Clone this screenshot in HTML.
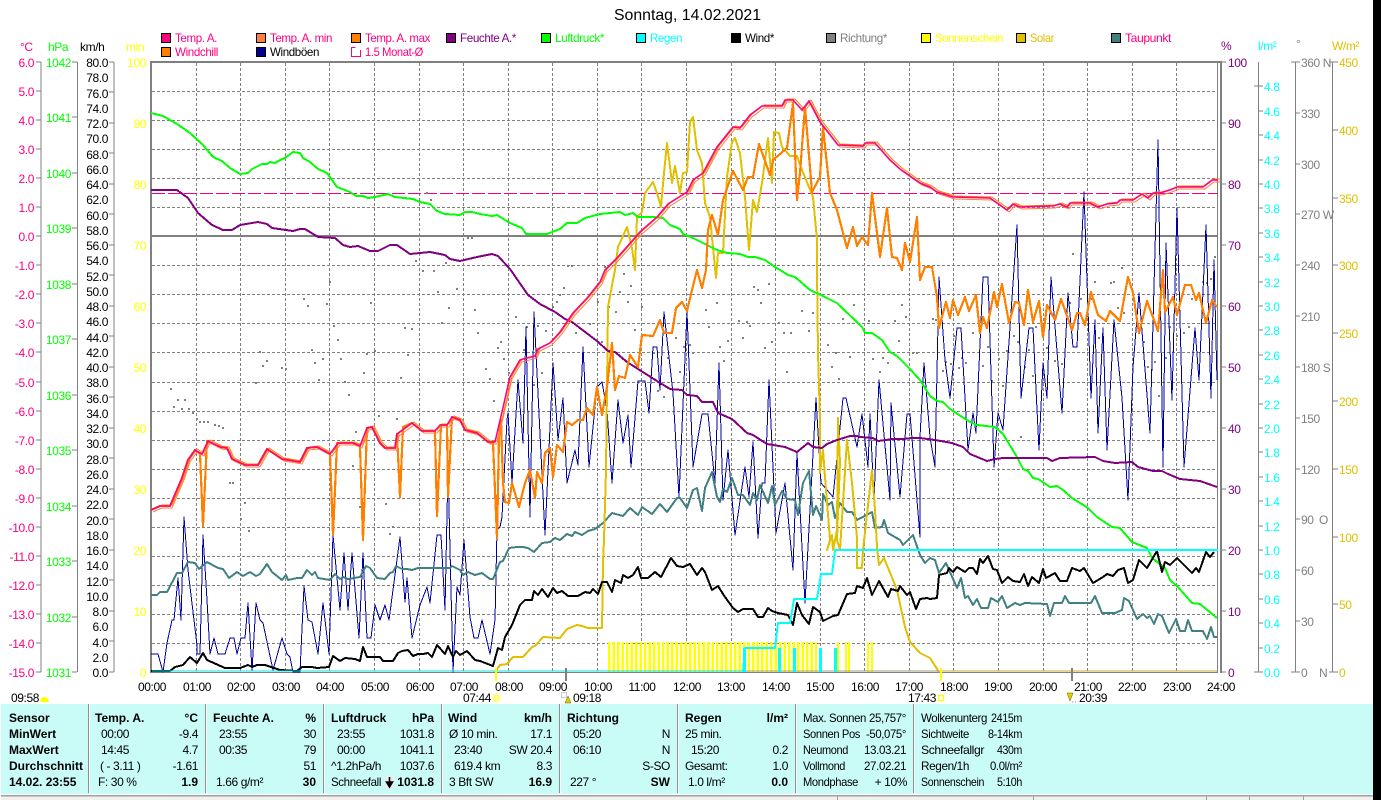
<!DOCTYPE html>
<html lang="de">
<head>
<meta charset="utf-8">
<title>Sonntag, 14.02.2021</title>
<style>
html,body{margin:0;padding:0;background:#fff}
svg{display:block;position:absolute;left:0;top:0}
text{font-family:"Liberation Sans",sans-serif;font-size:12px;letter-spacing:-.4px;white-space:pre}
.r{text-anchor:end}
.m{text-anchor:middle}
.b{font-weight:bold;letter-spacing:0}
.nl{letter-spacing:0}
.t{fill:#ff0080}.h{fill:#00ff00}.k{fill:#000}.y{fill:#ffff00}.p{fill:#800080}.c{fill:#00ffff}.g{fill:#808080}.s{fill:#e0c000}
.l{fill:none;stroke-linejoin:round;shape-rendering:crispEdges}
.cr{shape-rendering:crispEdges}
</style>
</head>
<body>
<svg width="1381" height="800" viewBox="0 0 1381 800" xmlns="http://www.w3.org/2000/svg">
<defs>
<polyline id="tmp" fill="none" points="151,510 160,506 170,506 182,478 188,460 195,450 202,454 208,441 220,447 227,448 232,459 245,465 258,465 267,449 282,459 300,462 307,448 317,447 330,454 338,443 353,443 360,446 367,428 372,427 380,443 385,448 395,448 397,434 412,423 422,431 435,431 440,425 447,425 452,417 460,420 465,430 477,433 488,442 495,442 502,412 510,377 520,360 535,356 538,349 550,343 560,332 573,313 588,297 600,282 605,270 617,258 640,232 657,217 668,204 687,192 693,180 703,173 717,147 733,127 740,128 750,115 762,106 782,106 785,100 793,100 802,110 809,101 820,122 838,145 863,146 865,143 875,143 890,160 900,169 920,183 930,187 937,192 953,197 990,198 1007,210 1013,204 1020,207 1053,206 1060,204 1067,207 1070,203 1090,203 1098,207 1107,204 1117,203 1120,200 1133,200 1142,194 1148,198 1153,193 1160,193 1170,190 1177,187 1203,187 1212,180 1218,180"/>
</defs>

<!-- black strip -->
<rect x="1373" y="0" width="8" height="800" fill="#000"/>

<!-- title -->
<text x="614" y="20" style="font-size:16px;letter-spacing:0" textLength="147" lengthAdjust="spacingAndGlyphs">Sonntag, 14.02.2021</text>

<!-- legend -->
<g stroke="#000" stroke-width="1.2" class="cr">
<rect x="161.5" y="33.5" width="9" height="9" fill="#ff0080"/>
<rect x="256.5" y="33.5" width="9" height="9" fill="#ff8040"/>
<rect x="351.5" y="33.5" width="9" height="9" fill="#ff8000"/>
<rect x="446.5" y="33.5" width="9" height="9" fill="#800080"/>
<rect x="541.5" y="33.5" width="9" height="9" fill="#00ff00"/>
<rect x="636.5" y="33.5" width="9" height="9" fill="#00ffff"/>
<rect x="731.5" y="33.5" width="9" height="9" fill="#000"/>
<rect x="826.5" y="33.5" width="9" height="9" fill="#808080"/>
<rect x="921.5" y="33.5" width="9" height="9" fill="#ffff00"/>
<rect x="1016.5" y="33.5" width="9" height="9" fill="#e0c000"/>
<rect x="1111.5" y="33.5" width="9" height="9" fill="#408080"/>
<rect x="161.5" y="47.5" width="9" height="9" fill="#ff8000"/>
<rect x="256.5" y="47.5" width="9" height="9" fill="#000090"/>
</g>
<path d="M355.5 47.5H351.5V56.5H360.5V50" fill="none" stroke="#ff0080" stroke-width="1.2" class="cr"/>
<g>
<text class="t" x="175" y="42" textLength="42" lengthAdjust="spacingAndGlyphs">Temp. A.</text>
<text class="t" x="270" y="42" textLength="62" lengthAdjust="spacingAndGlyphs">Temp. A. min</text>
<text class="t" x="365" y="42" textLength="65" lengthAdjust="spacingAndGlyphs">Temp. A. max</text>
<text class="p" x="460" y="42" textLength="56" lengthAdjust="spacingAndGlyphs">Feuchte A.*</text>
<text class="h" x="555" y="42" textLength="49" lengthAdjust="spacingAndGlyphs">Luftdruck*</text>
<text class="c" x="650" y="42" textLength="32" lengthAdjust="spacingAndGlyphs">Regen</text>
<text class="k" x="745" y="42" textLength="29" lengthAdjust="spacingAndGlyphs">Wind*</text>
<text class="g" x="840" y="42" textLength="47" lengthAdjust="spacingAndGlyphs">Richtung*</text>
<text class="y" x="935" y="42" textLength="68" lengthAdjust="spacingAndGlyphs">Sonnenschein</text>
<text class="s" x="1030" y="42" textLength="24" lengthAdjust="spacingAndGlyphs">Solar</text>
<text class="t" x="1125" y="42" textLength="46" lengthAdjust="spacingAndGlyphs">Taupunkt</text>
<text class="t" x="175" y="56" textLength="43" lengthAdjust="spacingAndGlyphs">Windchill</text>
<text class="k" x="270" y="56" textLength="49" lengthAdjust="spacingAndGlyphs">Windböen</text>
<text class="t" x="365" y="56" textLength="58" lengthAdjust="spacingAndGlyphs">1.5 Monat-Ø</text>
</g>

<!-- axis titles -->
<text class="t" x="20" y="51">°C</text>
<text class="h" x="48" y="51">hPa</text>
<text class="k" x="80" y="51">km/h</text>
<text class="y" x="126" y="51">min</text>
<text class="p" x="1221" y="50">%</text>
<text class="c" x="1258" y="50">l/m²</text>
<text class="g" x="1296" y="48">°</text>
<text class="s" x="1332" y="50">W/m²</text>

<!-- left axes lines + ticks -->
<path class="cr" fill="none" stroke="#808080" stroke-width="1" d="M41 62V672M77.500 62V672M114 62V672
M36 62H41M36 91H41M36 120H41M36 149H41M36 178H41M36 207H41M36 236H41M36 265H41M36 294H41M36 323H41M36 352H41M36 382H41M36 411H41M36 440H41M36 469H41M36 498H41M36 527H41M36 556H41M36 585H41M36 614H41M36 643H41M36 672H41
M72 62H77M72 117H77M72 173H77M72 228H77M72 284H77M72 339H77M72 395H77M72 450H77M72 506H77M72 561H77M72 617H77M72 672H77
M109 62H114M109 92H114M109 123H114M109 153H114M109 184H114M109 214H114M109 245H114M109 275H114M109 306H114M109 336H114M109 367H114M109 397H114M109 428H114M109 458H114M109 489H114M109 519H114M109 550H114M109 580H114M109 611H114M109 641H114M109 672H114"/>

<!-- right axes lines + ticks -->
<path class="cr" fill="none" stroke="#808080" stroke-width="1" d="M1258.500 62V672M1295.500 62V672M1332.500 62V672
M1222 62H1226M1222 123H1226M1222 184H1226M1222 245H1226M1222 306H1226M1222 367H1226M1222 428H1226M1222 489H1226M1222 550H1226M1222 611H1226M1222 672H1226
M1254 86H1263M1259 111H1263M1259 135H1263M1259 160H1263M1259 184H1263M1259 208H1263M1259 233H1263M1259 257H1263M1259 282H1263M1259 306H1263M1259 330H1263M1259 355H1263M1259 379H1263M1259 404H1263M1259 428H1263M1259 452H1263M1259 477H1263M1259 501H1263M1259 526H1263M1259 550H1263M1259 574H1263M1259 599H1263M1259 623H1263M1259 648H1263M1254 672H1263
M1291 62H1300M1296 113H1300M1296 164H1300M1296 214H1300M1296 265H1300M1296 316H1300M1296 367H1300M1296 418H1300M1296 469H1300M1296 519H1300M1296 570H1300M1296 621H1300M1291 672H1300
M1329 62H1338M1333 130H1338M1333 198H1338M1333 265H1338M1333 333H1338M1333 401H1338M1333 469H1338M1333 537H1338M1333 604H1338M1329 672H1338"/>

<!-- temp labels -->
<g class="t">
<text class="r" x="34" y="67">6.0</text><text class="r" x="34" y="96">5.0</text><text class="r" x="34" y="125">4.0</text><text class="r" x="34" y="154">3.0</text><text class="r" x="34" y="183">2.0</text><text class="r" x="34" y="212">1.0</text><text class="r" x="34" y="241">0.0</text><text class="r" x="34" y="270">-1.0</text><text class="r" x="34" y="299">-2.0</text><text class="r" x="34" y="328">-3.0</text><text class="r" x="34" y="357">-4.0</text><text class="r" x="34" y="387">-5.0</text><text class="r" x="34" y="416">-6.0</text><text class="r" x="34" y="445">-7.0</text><text class="r" x="34" y="474">-8.0</text><text class="r" x="34" y="503">-9.0</text><text class="r" x="34" y="532">-10.0</text><text class="r" x="34" y="561">-11.0</text><text class="r" x="34" y="590">-12.0</text><text class="r" x="34" y="619">-13.0</text><text class="r" x="34" y="648">-14.0</text><text class="r" x="34" y="677">-15.0</text>
</g>
<!-- hPa labels -->
<g class="h">
<text class="r" x="71" y="67">1042</text><text class="r" x="71" y="122">1041</text><text class="r" x="71" y="178">1040</text><text class="r" x="71" y="233">1039</text><text class="r" x="71" y="289">1038</text><text class="r" x="71" y="344">1037</text><text class="r" x="71" y="400">1036</text><text class="r" x="71" y="455">1035</text><text class="r" x="71" y="511">1034</text><text class="r" x="71" y="566">1033</text><text class="r" x="71" y="622">1032</text><text class="r" x="71" y="677">1031</text>
</g>
<!-- km/h labels -->
<g class="k">
<text class="r" x="108" y="67">80.0</text><text class="r" x="108" y="82">78.0</text><text class="r" x="108" y="98">76.0</text><text class="r" x="108" y="113">74.0</text><text class="r" x="108" y="128">72.0</text><text class="r" x="108" y="143">70.0</text><text class="r" x="108" y="159">68.0</text><text class="r" x="108" y="174">66.0</text><text class="r" x="108" y="189">64.0</text><text class="r" x="108" y="204">62.0</text><text class="r" x="108" y="220">60.0</text><text class="r" x="108" y="235">58.0</text><text class="r" x="108" y="250">56.0</text><text class="r" x="108" y="265">54.0</text><text class="r" x="108" y="281">52.0</text><text class="r" x="108" y="296">50.0</text><text class="r" x="108" y="311">48.0</text><text class="r" x="108" y="326">46.0</text><text class="r" x="108" y="342">44.0</text><text class="r" x="108" y="357">42.0</text><text class="r" x="108" y="372">40.0</text><text class="r" x="108" y="387">38.0</text><text class="r" x="108" y="403">36.0</text><text class="r" x="108" y="418">34.0</text><text class="r" x="108" y="433">32.0</text><text class="r" x="108" y="448">30.0</text><text class="r" x="108" y="464">28.0</text><text class="r" x="108" y="479">26.0</text><text class="r" x="108" y="494">24.0</text><text class="r" x="108" y="509">22.0</text><text class="r" x="108" y="525">20.0</text><text class="r" x="108" y="540">18.0</text><text class="r" x="108" y="555">16.0</text><text class="r" x="108" y="570">14.0</text><text class="r" x="108" y="586">12.0</text><text class="r" x="108" y="601">10.0</text><text class="r" x="108" y="616">8.0</text><text class="r" x="108" y="631">6.0</text><text class="r" x="108" y="647">4.0</text><text class="r" x="108" y="662">2.0</text><text class="r" x="108" y="677">0.0</text>
</g>
<!-- min labels -->
<g class="y">
<text class="r" x="146" y="67">100</text><text class="r" x="146" y="128">90</text><text class="r" x="146" y="189">80</text><text class="r" x="146" y="250">70</text><text class="r" x="146" y="311">60</text><text class="r" x="146" y="372">50</text><text class="r" x="146" y="433">40</text><text class="r" x="146" y="494">30</text><text class="r" x="146" y="555">20</text><text class="r" x="146" y="616">10</text><text class="r" x="146" y="677">0</text>
</g>
<!-- % labels -->
<g class="p">
<text x="1228" y="67">100</text><text x="1228" y="128">90</text><text x="1228" y="189">80</text><text x="1228" y="250">70</text><text x="1228" y="311">60</text><text x="1228" y="372">50</text><text x="1228" y="433">40</text><text x="1228" y="494">30</text><text x="1228" y="555">20</text><text x="1228" y="616">10</text><text x="1228" y="677">0</text>
</g>
<!-- l/m2 labels -->
<g class="c">
<text x="1264" y="91">4.8</text><text x="1264" y="116">4.6</text><text x="1264" y="140">4.4</text><text x="1264" y="165">4.2</text><text x="1264" y="189">4.0</text><text x="1264" y="213">3.8</text><text x="1264" y="238">3.6</text><text x="1264" y="262">3.4</text><text x="1264" y="287">3.2</text><text x="1264" y="311">3.0</text><text x="1264" y="335">2.8</text><text x="1264" y="360">2.6</text><text x="1264" y="384">2.4</text><text x="1264" y="409">2.2</text><text x="1264" y="433">2.0</text><text x="1264" y="457">1.8</text><text x="1264" y="482">1.6</text><text x="1264" y="506">1.4</text><text x="1264" y="531">1.2</text><text x="1264" y="555">1.0</text><text x="1264" y="579">0.8</text><text x="1264" y="604">0.6</text><text x="1264" y="628">0.4</text><text x="1264" y="653">0.2</text><text x="1264" y="677">0.0</text>
</g>
<!-- degree labels -->
<g class="g">
<text x="1301" y="67">360 N</text><text x="1301" y="118">330</text><text x="1301" y="169">300</text><text x="1301" y="219">270 W</text><text x="1301" y="270">240</text><text x="1301" y="321">210</text><text x="1301" y="372">180 S</text><text x="1301" y="423">150</text><text x="1301" y="474">120</text><text x="1301" y="524">90</text><text x="1319" y="524">O</text><text x="1301" y="575">60</text><text x="1301" y="626">30</text><text x="1301" y="677">0</text><text x="1319" y="677">N</text>
</g>
<!-- solar labels -->
<g class="s">
<text x="1339" y="67">450</text><text x="1339" y="135">400</text><text x="1339" y="203">350</text><text x="1339" y="270">300</text><text x="1339" y="338">250</text><text x="1339" y="406">200</text><text x="1339" y="474">150</text><text x="1339" y="542">100</text><text x="1339" y="609">50</text><text x="1339" y="677">0</text>
</g>

<!-- grid -->
<path class="cr" fill="none" stroke="#808080" stroke-width="1" stroke-dasharray="3 2" d="M152 91.500H1218M152 120.500H1218M152 149.500H1218M152 178.500H1218M152 207.500H1218M152 265.500H1218M152 294.500H1218M152 323.500H1218M152 352.500H1218M152 382.500H1218M152 411.500H1218M152 440.500H1218M152 469.500H1218M152 498.500H1218M152 527.500H1218M152 556.500H1218M152 585.500H1218M152 614.500H1218M152 643.500H1218
M196.500 63V672M240.500 63V672M285.500 63V672M329.500 63V672M374.500 63V672M419.500 63V672M463.500 63V672M508.500 63V672M552.500 63V672M597.500 63V672M641.500 63V672M686.500 63V672M731.500 63V672M775.500 63V672M820.500 63V672M864.500 63V672M909.500 63V672M953.500 63V672M998.500 63V672M1043.500 63V672M1087.500 63V672M1132.500 63V672M1176.500 63V672"/>
<!-- frame + zero + average -->
<g class="cr" fill="#808080">
<rect x="150" y="61" width="1072" height="2"/>
<rect x="150" y="61" width="2" height="612"/>
<rect x="1220" y="61" width="2" height="612"/>
<rect x="1217" y="63" width="1" height="609"/>
<rect x="152" y="235" width="1066" height="2"/>
<rect x="152" y="672" width="1066" height="1"/>
</g>
<path class="cr" d="M152 193.500H1218" stroke="#f0007f" stroke-width="1" stroke-dasharray="13 3" fill="none"/>

<!-- direction dots -->
<path class="cr" fill="none" stroke="#808080" stroke-width="2" d="M170 389h2M177 400h2M184 400h2M173 407h2M181 409h2M188 409h2M192 413h2M196 419h2M199 422h2M203 422h2M207 422h2M214 425h2M218 426h2M222 428h2M229 483h2M232 483h2M244 503h2M240 519h2M248 531h2M259 352h2M266 361h2M262 366h2M255 383h2M281 368h2M285 369h2M303 299h2M307 306h2M326 304h2M329 282h2M311 350h2M322 359h2M314 363h2M318 380h2M333 326h2M337 340h2M340 359h2M344 382h2M348 395h2M355 432h2M352 466h2M359 507h2M370 303h2M366 354h2M374 351h2M363 373h2M378 416h2M385 504h2M389 534h2M392 527h2M396 419h2M400 378h2M407 355h2M404 328h2M411 329h2M422 271h2M433 271h2M437 292h2M456 289h2M448 308h2M441 323h2M426 193h2M430 200h2M415 261h2M445 263h2M467 238h2M471 238h2M567 266h2M571 266h2M604 267h2M474 310h2M477 333h2M500 342h2M497 348h2M503 359h2M485 369h2M489 379h2M493 401h2M515 317h2M508 373h2M523 350h2M526 327h2M537 326h2M545 331h2M541 373h2M533 385h2M552 307h2M556 302h2M559 295h2M563 288h2M582 362h2M575 333h2M589 324h2M597 302h2M601 342h2M608 307h2M615 312h2M619 292h2M627 302h2M630 286h2M623 274h2M634 330h2M641 307h2M653 353h2M657 391h2M663 397h2M667 358h2M675 338h2M679 372h2M683 347h2M689 345h2M692 353h2M705 310h2M708 327h2M716 303h2M719 347h2M723 361h2M727 341h2M738 321h2M746 322h2M749 326h2M742 338h2M753 287h2M757 290h2M760 303h2M764 348h2M768 284h2M771 342h2M778 323h2M783 333h2M786 372h2M790 333h2M801 311h2M808 331h2M812 313h2M827 345h2M831 367h2M835 353h2M838 379h2M842 319h2M849 357h2M853 305h2M868 321h2M872 359h2M879 372h2M882 358h2M887 363h2M894 321h2M901 305h2M898 341h2M905 317h2M912 353h2M916 353h2M1072 254h2M1121 268h2M1214 257h2M932 319h2M935 320h2M972 333h2M953 336h2M945 362h2M950 364h2M942 371h2M958 368h2M961 358h2M965 363h2M982 366h2M987 347h2M998 359h2M991 381h2M1002 386h2M1006 351h2M1013 336h2M1017 342h2M1020 437h2M1024 367h2M1028 350h2M1032 376h2M1035 327h2M1046 348h2M1054 361h2M1061 364h2M1069 303h2M1077 313h2M1080 299h2M1091 299h2M1094 282h2M1098 338h2M1110 283h2M1113 282h2M1117 308h2M1123 313h2M1143 342h2M1147 367h2M1151 370h2M1154 362h2M1158 396h2M1165 358h2M1169 327h2M1176 336h2M1183 333h2M1188 327h2M1191 299h2M1195 299h2M1202 282h2M1206 283h2M1210 279h2M1217 275h1"/>

<!-- sunshine bars -->
<path class="cr" d="M608 657H817" fill="none" stroke="#ffff00" stroke-width="30" stroke-dasharray="2.500 2"/>
<g class="cr" fill="#ffff00">
<rect x="837" y="642" width="2" height="30"/>
<rect x="845" y="642" width="2" height="30"/><rect x="848" y="642" width="2" height="30"/>
<rect x="867" y="642" width="2" height="30"/><rect x="871" y="642" width="2" height="30"/>
</g>

<!-- gusts -->
<polyline class="l" stroke="#0000a0" stroke-width="1" points="151,654 158,654 163,672 167,643 172,620 174,620 178,578 181,620 184,517 188,570 197,645 197,654 200,654 203,535 207,600 210,654 214,638 218,654 225,654 230,638 234,638 237,654 241,638 245,638 248,603 252,670 256,603 260,620 263,623 273,670 282,638 287,654 290,657 293,672 300,672 304,586 308,620 312,622 318,654 323,603 329,654 333,535 340,610 344,553 348,610 352,553 359,638 363,553 367,638 371,638 375,605 380,620 385,605 389,620 400,537 405,602 407,578 412,638 420,605 427,587 430,603 437,535 441,535 445,610 448,467 453,672 457,587 460,595 464,540 470,617 474,638 478,638 482,620 490,654 495,620 497,530 500,527 502,517 507,420 508,413 512,483 518,380 523,443 526,327 530,517 534,312 545,535 553,363 558,440 563,398 567,483 575,450 578,465 583,347 589,467 597,387 602,382 607,410 612,483 618,400 623,443 628,415 631,467 638,381 645,381 649,413 653,347 657,347 660,390 664,312 673,393 679,497 687,312 693,467 702,414 708,414 715,483 719,363 723,500 728,450 735,535 745,467 749,497 753,442 758,538 762,483 765,483 769,380 776,533 785,483 793,570 797,453 805,603 816,398 821,483 833,497 843,398 846,398 857,447 862,414 868,467 870,414 874,500 879,380 890,500 891,403 900,497 907,414 910,414 920,537 920,437 924,363 930,437 935,467 939,277 945,360 950,398 957,328 961,328 968,450 973,413 976,433 983,277 988,277 994,467 998,413 1003,430 1017,225 1021,398 1029,328 1033,328 1039,450 1043,363 1047,398 1051,277 1062,413 1068,293 1073,347 1077,347 1084,192 1091,398 1095,320 1098,433 1103,328 1107,450 1114,320 1122,398 1128,500 1133,367 1139,293 1150,433 1158,140 1163,467 1166,243 1172,400 1177,208 1184,467 1195,328 1199,380 1206,225 1211,398 1214,260 1217,380"/>

<!-- dew point -->
<polyline class="l" stroke="#408080" stroke-width="2" points="151,595 157,595 160,592 167,592 177,573 182,573 188,562 195,563 199,569 207,562 218,568 223,569 229,578 237,572 243,576 250,572 256,576 260,574 267,564 272,572 282,580 286,575 288,580 297,578 302,578 307,570 312,575 315,572 318,578 330,580 335,574 340,579 343,577 348,579 360,577 366,566 370,568 377,578 385,579 390,573 393,572 396,566 402,569 407,569 412,570 418,568 443,568 450,568 452,566 460,570 463,575 468,572 475,575 482,573 490,579 493,579 500,562 503,561 509,548 517,547 523,547 528,548 534,552 542,543 550,542 555,538 560,540 567,534 572,536 575,532 582,535 588,531 595,529 603,523 612,513 623,516 630,508 638,515 642,507 652,514 660,504 667,512 677,498 680,498 687,508 693,490 697,488 702,511 705,488 712,472 717,497 720,502 723,489 727,492 732,478 738,495 743,495 750,505 753,493 757,500 760,485 768,503 772,486 775,505 782,491 787,499 795,500 798,515 803,483 809,471 813,515 816,506 822,520 823,494 828,505 832,502 835,518 840,503 847,512 852,512 857,520 872,512 875,528 882,527 884,520 888,533 900,540 903,545 913,535 920,555 925,563 930,558 935,560 939,573 946,563 950,572 957,588 961,578 965,598 968,596 973,605 977,599 981,608 988,608 991,598 998,602 1002,596 1007,608 1015,603 1020,605 1025,603 1047,604 1050,616 1054,603 1062,603 1065,596 1069,603 1091,603 1095,596 1102,613 1115,613 1122,610 1124,598 1129,601 1137,619 1143,614 1147,618 1150,616 1154,624 1158,614 1162,616 1169,633 1176,619 1180,631 1185,631 1188,620 1192,631 1203,631 1207,639 1211,627 1214,637 1217,637"/>

<!-- solar -->
<polyline class="l" stroke="#e0c000" stroke-width="2" points="495,672 500,665 507,664 513,657 523,657 532,647 535,646 543,637 560,638 567,629 577,625 582,626 588,628 602,628 603,563 604,540 606,470 607,387 608,307 613,280 615,270 618,247 627,227 632,248 635,270 637,217 642,212 645,193 653,182 657,193 661,207 664,173 667,143 672,183 675,166 680,193 683,173 687,172 690,122 693,117 697,150 702,163 705,203 710,217 716,278 718,253 723,253 727,177 732,142 735,138 740,153 745,197 749,250 753,200 757,212 762,183 768,138 772,183 774,132 779,133 782,147 790,156 797,156 802,170 813,197 817,240 817,270 818,353 820,420 820,473 823,450 825,477 830,540 827,550 832,535 833,550 837,530 838,418 840,462 837,540 840,550 847,440 852,483 857,538 857,568 862,568 863,550 872,470 875,510 877,547 879,565 884,558 893,580 897,590 905,627 910,642 920,653 930,658 939,672"/>

<!-- pressure -->
<polyline class="l" stroke="#00ff00" stroke-width="2" points="151,113 163,116 177,124 190,133 203,145 213,157 222,161 230,168 240,174 248,173 252,169 262,164 267,164 270,162 275,163 280,160 285,158 293,152 300,153 303,158 310,162 318,169 327,173 337,187 350,192 356,196 363,196 368,198 375,197 388,194 395,197 413,199 420,202 430,204 437,211 445,214 460,215 465,212 472,212 480,214 492,216 497,215 502,218 508,222 522,228 526,234 547,234 560,229 567,223 577,223 585,218 600,214 620,212 625,215 633,213 638,217 653,217 663,218 670,225 680,229 683,234 693,238 717,250 727,253 740,254 748,257 755,257 765,260 775,267 780,270 788,275 795,277 810,290 827,298 837,303 862,327 865,333 872,333 882,340 890,352 897,356 908,367 920,380 930,396 937,401 943,402 950,409 970,422 977,425 995,427 1003,434 1017,457 1023,469 1028,471 1033,478 1038,479 1050,487 1057,486 1063,490 1072,498 1088,508 1097,517 1112,527 1120,528 1132,542 1147,548 1152,558 1165,568 1170,580 1178,587 1192,603 1200,604 1217,618"/>

<!-- humidity -->
<polyline class="l" stroke="#800080" stroke-width="2" points="151,190 177,190 188,198 198,213 212,225 223,230 232,230 240,225 258,222 267,224 272,228 293,231 300,229 305,229 318,237 335,238 343,245 350,247 358,246 370,251 378,251 390,245 397,245 410,254 430,252 445,255 450,259 460,261 477,257 492,254 498,256 510,269 528,295 540,304 555,312 565,319 572,322 597,341 608,351 615,352 627,362 638,369 657,381 670,389 682,390 687,395 697,396 702,402 713,402 718,413 732,419 747,433 753,435 767,444 785,447 797,452 808,443 813,447 822,448 827,444 837,440 850,436 857,436 860,437 873,438 878,441 893,439 902,439 912,438 920,438 935,440 952,443 963,447 970,454 987,461 995,459 1003,458 1047,458 1052,461 1060,458 1095,457 1103,461 1115,463 1132,462 1138,467 1153,471 1162,471 1168,474 1180,479 1200,481 1217,487"/>

<!-- windchill -->
<polyline class="l" stroke="#ff8000" stroke-width="2.200" points="151,510 160,506 170,506 182,478 188,460 195,450 200,454 203,526 207,441 220,447 227,448 232,459 245,465 258,465 267,449 282,459 300,462 307,448 317,447 330,454 333,535 337,443 353,443 360,446 363,540 367,428 372,427 380,443 385,448 395,448 397,434 400,497 403,427 412,423 422,431 435,431 437,516 441,425 447,425 448,497 452,417 460,420 465,430 477,433 488,442 493,443 495,490 497,538 499,437 501,420 503,483 505,502 509,503 512,483 519,507 525,483 530,470 535,498 537,472 542,483 545,453 550,448 553,477 557,445 563,452 567,422 572,425 578,420 583,420 587,408 593,415 597,387 602,415 607,387 612,343 615,390 619,376 625,378 630,355 638,367 642,335 653,336 660,320 664,333 672,333 676,308 682,302 687,311 692,290 697,270 702,288 706,270 708,230 712,215 718,235 723,200 733,171 743,190 748,177 753,177 759,144 770,175 773,160 787,148 793,103 797,200 800,173 805,107 812,192 820,177 823,127 830,193 837,210 847,248 853,227 857,246 862,237 868,245 872,193 880,257 887,208 892,257 897,258 902,270 905,243 910,262 917,217 920,280 925,267 932,267 937,297 939,328 946,302 950,318 953,300 958,315 965,297 969,311 976,295 980,333 983,317 987,328 994,292 997,307 1002,284 1009,323 1015,302 1019,303 1024,325 1028,290 1033,322 1039,301 1043,337 1047,305 1055,320 1061,299 1072,330 1077,313 1080,313 1085,325 1091,292 1098,315 1106,321 1110,311 1120,321 1128,277 1133,293 1139,333 1147,301 1158,331 1163,270 1165,312 1173,297 1177,315 1185,285 1191,285 1196,300 1199,293 1206,323 1212,300 1217,307"/>

<!-- temp max/min/avg -->
<use href="#tmp" transform="translate(2,-1)" stroke="#ff8000" stroke-width="1"/>
<use href="#tmp" transform="translate(2,2)" stroke="#ff8040" stroke-width="1"/>
<use href="#tmp" stroke="#ff0080" stroke-width="1.600"/>

<!-- wind -->
<polyline class="l" stroke="#000" stroke-width="2" points="151,671 170,671 175,667 183,665 190,657 197,663 203,653 207,660 225,668 240,668 248,665 252,667 257,665 265,665 280,670 297,671 302,667 312,667 317,668 329,667 333,656 340,661 345,658 355,659 360,661 363,647 367,657 380,657 383,661 393,661 398,653 402,651 408,650 413,656 418,654 423,654 428,653 432,657 437,645 445,654 448,646 453,657 456,651 460,655 467,651 475,660 480,661 493,666 498,648 502,650 505,637 512,625 520,605 525,600 532,600 534,591 538,595 542,589 548,597 553,588 557,593 562,591 568,596 578,596 585,592 590,593 593,589 598,594 602,582 607,582 612,592 615,580 621,583 623,575 628,578 633,575 638,567 641,578 648,578 655,572 661,577 671,558 677,566 683,567 690,564 697,575 702,568 705,572 712,590 718,586 725,597 733,608 738,612 743,609 753,609 758,617 763,617 768,608 772,611 778,613 788,615 793,625 797,603 802,615 809,624 813,607 820,612 823,621 833,616 838,615 847,594 855,593 857,586 863,588 867,578 872,595 879,581 888,597 891,589 898,591 900,586 907,595 910,592 916,609 920,599 927,598 930,599 937,598 939,575 947,573 949,568 953,572 957,567 965,572 969,568 973,568 977,574 980,559 983,563 988,556 993,569 997,570 1002,583 1008,577 1013,581 1020,582 1024,574 1028,586 1032,577 1039,583 1043,569 1046,578 1055,573 1060,581 1067,581 1072,568 1080,571 1084,568 1093,583 1103,577 1107,574 1113,576 1118,570 1124,568 1128,583 1133,580 1139,560 1147,568 1157,551 1162,572 1165,562 1170,565 1177,558 1192,573 1196,568 1199,572 1206,552 1210,557 1214,552"/>

<!-- rain -->
<path class="cr" d="M152 671H745" stroke="#00e8e8" stroke-width="1" fill="none"/>
<path class="cr" d="M940 671H1217" stroke="#d8a830" stroke-width="1" fill="none"/>
<path class="cr" d="M745 671H940" stroke="#a0a080" stroke-width="1" fill="none"/>
<g class="cr" fill="#00ffff">
<rect x="743" y="648" width="3" height="24"/>
<rect x="778" y="648" width="3" height="24"/>
<rect x="793" y="648" width="3" height="24"/>
<rect x="819" y="648" width="3" height="24"/>
<rect x="834" y="648" width="3" height="24"/>
</g>
<polyline class="l" stroke="#00ffff" stroke-width="2" points="743,672 745,648 775,648 778,623 790,623 794,599 817,599 821,574 832,574 835,550 1218,550"/>

<!-- sun / moon time marks -->
<g class="cr">
<rect x="495" y="668" width="2" height="13" fill="#ffff00"/>
<rect x="565" y="668" width="2" height="13" fill="#808080"/>
<rect x="940" y="668" width="2" height="13" fill="#ffff00"/>
<rect x="1071" y="668" width="2" height="13" fill="#808080"/>
</g>

<!-- x labels -->
<g class="k">
<text class="m" x="152" y="691">00:00</text><text class="m" x="197" y="691">01:00</text><text class="m" x="241" y="691">02:00</text><text class="m" x="286" y="691">03:00</text><text class="m" x="330" y="691">04:00</text><text class="m" x="375" y="691">05:00</text><text class="m" x="420" y="691">06:00</text><text class="m" x="464" y="691">07:00</text><text class="m" x="509" y="691">08:00</text><text class="m" x="553" y="691">09:00</text><text class="m" x="598" y="691">10:00</text><text class="m" x="642" y="691">11:00</text><text class="m" x="687" y="691">12:00</text><text class="m" x="731" y="691">13:00</text><text class="m" x="776" y="691">14:00</text><text class="m" x="820" y="691">15:00</text><text class="m" x="865" y="691">16:00</text><text class="m" x="909" y="691">17:00</text><text class="m" x="954" y="691">18:00</text><text class="m" x="998" y="691">19:00</text><text class="m" x="1043" y="691">20:00</text><text class="m" x="1088" y="691">21:00</text><text class="m" x="1132" y="691">22:00</text><text class="m" x="1177" y="691">23:00</text><text class="m" x="1221" y="691">24:00</text>
</g>
<text x="11" y="702">09:58</text>
<path d="M40 702A4.500 5 0 0 1 49 702Z" fill="#ffff00"/>
<text x="463" y="702">07:44</text>
<circle cx="496.500" cy="698" r="3.200" fill="#ffff00"/>
<path d="M496.500 692.500V703.500M491 698H502M492.500 694L500.500 702M500.500 694L492.500 702" stroke="#ffff90" stroke-width="1" fill="none"/>
<text x="573" y="702">09:18</text>
<rect x="561.500" y="692.500" width="5" height="5" fill="none" stroke="#9090c0" stroke-width="1" stroke-dasharray="1 1"/>
<path d="M568 696L571 703H565Z" fill="#e0d000" stroke="#606000" stroke-width=".5"/>
<text x="908" y="702">17:43</text>
<rect x="938.500" y="695.500" width="5" height="5" fill="none" stroke="#ffff00" stroke-width="1.300"/>
<text x="1079" y="702">20:39</text>
<path d="M1067 693H1073L1070 701Z" fill="#e0d000" stroke="#606000" stroke-width=".5"/>
<path d="M1072 702h1M1075 702h1" stroke="#9090c0" stroke-width="1"/>

<!-- bottom panel -->
<rect x="1" y="704" width="1372" height="90" fill="#c9fbf7" class="cr"/>
<g class="cr" fill="#909090">
<rect x="88" y="704" width="1" height="89"/><rect x="205" y="704" width="1" height="89"/><rect x="323" y="704" width="1" height="89"/><rect x="441" y="704" width="1" height="89"/><rect x="559" y="704" width="1" height="89"/><rect x="677" y="704" width="1" height="89"/><rect x="795" y="704" width="1" height="89"/><rect x="913" y="704" width="1" height="89"/>
</g>
<g class="cr" fill="#fff">
<rect x="89" y="704" width="1" height="89"/><rect x="206" y="704" width="1" height="89"/><rect x="324" y="704" width="1" height="89"/><rect x="442" y="704" width="1" height="89"/><rect x="560" y="704" width="1" height="89"/><rect x="678" y="704" width="1" height="89"/><rect x="796" y="704" width="1" height="89"/><rect x="914" y="704" width="1" height="89"/>
</g>
<rect x="0" y="794" width="1373" height="1" fill="#fff" class="cr"/>
<rect x="1" y="795" width="1372" height="5" fill="#f0f0f0" class="cr"/>
<rect x="1" y="795" width="1372" height="1.500" fill="#a0a0a0" class="cr"/>
<g class="cr" fill="#a0a0a0">
<rect x="837" y="796" width="1" height="4"/><rect x="1033" y="796" width="1" height="4"/><rect x="1206" y="796" width="1" height="4"/><rect x="1249" y="796" width="1" height="4"/><rect x="1303" y="796" width="1" height="4"/>
</g>

<g>
<!-- col 0 -->
<text class="b" x="9" y="722">Sensor</text>
<text class="b" x="9" y="738">MinWert</text>
<text class="b" x="9" y="754">MaxWert</text>
<text class="b" x="9" y="770">Durchschnitt</text>
<text class="b" x="9" y="786">14.02. 23:55</text>
<!-- temp -->
<text class="b" x="95" y="722">Temp. A.</text><text class="b r" x="198" y="722">°C</text>
<text x="101" y="738">00:00</text><text class="r" x="198" y="738">-9.4</text>
<text x="101" y="754">14:45</text><text class="r" x="198" y="754">4.7</text>
<text x="100" y="770">( - 3.11 )</text><text class="r" x="198" y="770">-1.61</text>
<text x="98" y="786">F: 30 %</text><text class="b r" x="198" y="786">1.9</text>
<!-- humidity -->
<text class="b" x="213" y="722">Feuchte A.</text><text class="b r" x="316" y="722">%</text>
<text x="219" y="738">23:55</text><text class="r" x="316" y="738">30</text>
<text x="219" y="754">00:35</text><text class="r" x="316" y="754">79</text>
<text class="r" x="316" y="770">51</text>
<text x="216" y="786">1.66 g/m²</text><text class="b r" x="316" y="786">30</text>
<!-- pressure -->
<text class="b" x="331" y="722">Luftdruck</text><text class="b r" x="434" y="722">hPa</text>
<text x="337" y="738">23:55</text><text class="r" x="434" y="738">1031.8</text>
<text x="337" y="754">00:00</text><text class="r" x="434" y="754">1041.1</text>
<text x="331" y="770">^1.2hPa/h</text><text class="r" x="434" y="770">1037.6</text>
<text x="331" y="786" textLength="50" lengthAdjust="spacingAndGlyphs">Schneefall</text>
<rect x="386" y="776" width="7" height="12" fill="#f4e8e8"/>
<path d="M389.500 777V785M386.500 782L389.500 787L392.500 782Z" fill="#000" stroke="#000" stroke-width="1.600"/>
<text class="b r" x="434" y="786">1031.8</text>
<!-- wind -->
<text class="b" x="448" y="722">Wind</text><text class="b r" x="552" y="722">km/h</text>
<text x="449" y="738">Ø 10 min.</text><text class="r" x="552" y="738">17.1</text>
<text x="454" y="754">23:40</text><text class="r" x="552" y="754">SW 20.4</text>
<text x="454" y="770">619.4 km</text><text class="r" x="552" y="770">8.3</text>
<text x="449" y="786">3 Bft SW</text><text class="b r" x="552" y="786">16.9</text>
<!-- direction -->
<text class="b" x="567" y="722">Richtung</text>
<text x="573" y="738">05:20</text><text class="r" x="670" y="738">N</text>
<text x="573" y="754">06:10</text><text class="r" x="670" y="754">N</text>
<text class="r" x="670" y="770">S-SO</text>
<text x="570" y="786">227 °</text><text class="b r" x="670" y="786">SW</text>
<!-- rain -->
<text class="b" x="685" y="722">Regen</text><text class="b r" x="788" y="722">l/m²</text>
<text x="685" y="738">25 min.</text>
<text x="691" y="754">15:20</text><text class="r" x="788" y="754">0.2</text>
<text x="685" y="770">Gesamt:</text><text class="r" x="788" y="770">1.0</text>
<text x="688" y="786">1.0 l/m²</text><text class="b r" x="788" y="786">0.0</text>
<!-- sun/moon -->
<text x="803" y="722" textLength="63" lengthAdjust="spacingAndGlyphs">Max. Sonnen</text><text x="869" y="722" textLength="37" lengthAdjust="spacingAndGlyphs">25,757°</text>
<text x="803" y="738" textLength="57" lengthAdjust="spacingAndGlyphs">Sonnen Pos</text><text x="866" y="738" textLength="40" lengthAdjust="spacingAndGlyphs">-50,075°</text>
<text x="803" y="754" textLength="45" lengthAdjust="spacingAndGlyphs">Neumond</text><text x="864" y="754" textLength="42" lengthAdjust="spacingAndGlyphs">13.03.21</text>
<text x="803" y="770" textLength="42" lengthAdjust="spacingAndGlyphs">Vollmond</text><text x="864" y="770" textLength="42" lengthAdjust="spacingAndGlyphs">27.02.21</text>
<text x="803" y="786" textLength="55" lengthAdjust="spacingAndGlyphs">Mondphase</text><text class="r" x="907" y="786">+ 10%</text>
<!-- misc -->
<text x="921" y="722" textLength="66" lengthAdjust="spacingAndGlyphs">Wolkenunterg</text><text x="991" y="722" textLength="31" lengthAdjust="spacingAndGlyphs">2415m</text>
<text x="921" y="738" textLength="48" lengthAdjust="spacingAndGlyphs">Sichtweite</text><text x="988" y="738" textLength="34" lengthAdjust="spacingAndGlyphs">8-14km</text>
<text x="921" y="754" textLength="63" lengthAdjust="spacingAndGlyphs">Schneefallgr</text><text x="997" y="754" textLength="25" lengthAdjust="spacingAndGlyphs">430m</text>
<text x="921" y="770" textLength="48" lengthAdjust="spacingAndGlyphs">Regen/1h</text><text x="990" y="770" textLength="32" lengthAdjust="spacingAndGlyphs">0.0l/m²</text>
<text x="921" y="786" textLength="63" lengthAdjust="spacingAndGlyphs">Sonnenschein</text><text x="997" y="786" textLength="25" lengthAdjust="spacingAndGlyphs">5:10h</text>
</g>
</svg>
</body>
</html>
